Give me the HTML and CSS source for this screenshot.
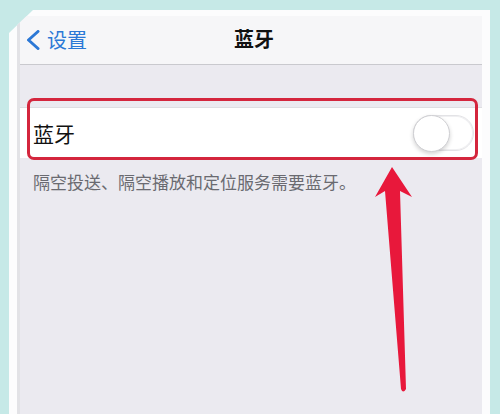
FILE: index.html
```html
<!DOCTYPE html>
<html lang="zh-CN">
<head>
  <meta charset="UTF-8" />
  <meta name="viewport" content="width=device-width, initial-scale=1.0" />
  <title>蓝牙</title>
  <link rel="stylesheet" href="styles.css">
</head>
<body>
<div class="device">
  <div class="screen">
    <!-- Navigation bar -->
    <header class="nav">
      <a class="back" href="#">
        <svg width="16" height="20" viewBox="0 0 16 20"><path d="M13 1.5 L3.5 10 L13 18.5" fill="none" stroke="#2b78d6" stroke-width="3" stroke-linecap="round" stroke-linejoin="round"/></svg>
        <span>设置</span>
      </a>
      <h1>蓝牙</h1>
    </header>

    <!-- Bluetooth toggle -->
    <section class="group">
      <div class="cell">
        <span class="label">蓝牙</span>
        <span class="switch"><span class="knob"></span></span>
      </div>
      <div class="mark"></div>
    </section>
    <p class="note">隔空投送、隔空播放和定位服务需要蓝牙。</p>

    <!-- Annotation arrow -->
    <svg class="arrow" width="40" height="230" viewBox="0 0 40 230">
      <path d="M17 0 L37 30 L25 24 L31 222 Q28 227 26 222 L10 24 L0 30 Z" fill="#e8183b"/>
    </svg>
  </div>
</div>
</body>
</html>
```

FILE: styles.css
```css
/* Global */
body {
  margin: 0;
  background: #c6e9e7;
  font-family: "Noto Sans CJK SC", "Noto Sans", sans-serif;
  overflow: hidden;
}
.device {
  margin: 10px 10px 0 9px;
  height: 404px;
  padding: 6px 8px 0 8px;
  background: #fcfcfd;
  clip-path: polygon(24px 0, 100% 0, 100% 100%, 0 100%, 0 23px);
}
.screen {
  position: relative;
  height: 100%;
  background: #ebeaf0;
  border-left: 3px solid #e2e2e6;
}
/* Navigation bar */
.nav {
  display: flex;
  align-items: center;
  justify-content: center;
  position: relative;
  height: 48px;
  background: #f6f6f8;
  border-bottom: 1px solid #c9c9ce;
}
.nav h1 {
  margin: -3px 0 0 0;
  font-size: 20px;
  font-weight: 600;
  color: #111;
  padding-left: 6px;
}
.back {
  position: absolute;
  left: 5px;
  top: 9px;
  display: flex;
  align-items: center;
  gap: 6px;
  color: #2b78d6;
  text-decoration: none;
  font-size: 20px;
}
/* Group */
.group {
  position: relative;
  margin-top: 42px;
}
.cell {
  display: flex;
  align-items: center;
  justify-content: space-between;
  height: 50px;
  padding: 0 8px 0 13px;
  background: #fff;
  border-top: 1px solid #dedee2;
}
.label {
  font-size: 21px;
  color: #111;
}
.switch {
  display: flex;
  width: 61px;
  height: 36px;
  border-radius: 18px;
  border: 1px solid #e3e3e6;
  background: #fff;
  box-sizing: border-box;
  box-shadow: inset 0 0 0 1px #f0f0f2;
}
.knob {
  width: 37px;
  height: 37px;
  margin: -1px 0 0 -1px;
  border-radius: 50%;
  background: #fff;
  border: 1px solid #cfcfd3;
  box-sizing: border-box;
  box-shadow: 0 2px 4px rgba(0,0,0,0.18);
}
.mark {
  position: absolute;
  left: 7px;
  right: 4px;
  top: -9px;
  bottom: -2px;
  border: 3px solid #d4263d;
  border-radius: 7px;
}
.note {
  margin: 11px 0 0 13px;
  font-size: 17px;
  color: #6a6a70;
}
.arrow {
  position: absolute;
  left: 355px;
  top: 151px;
}
```
